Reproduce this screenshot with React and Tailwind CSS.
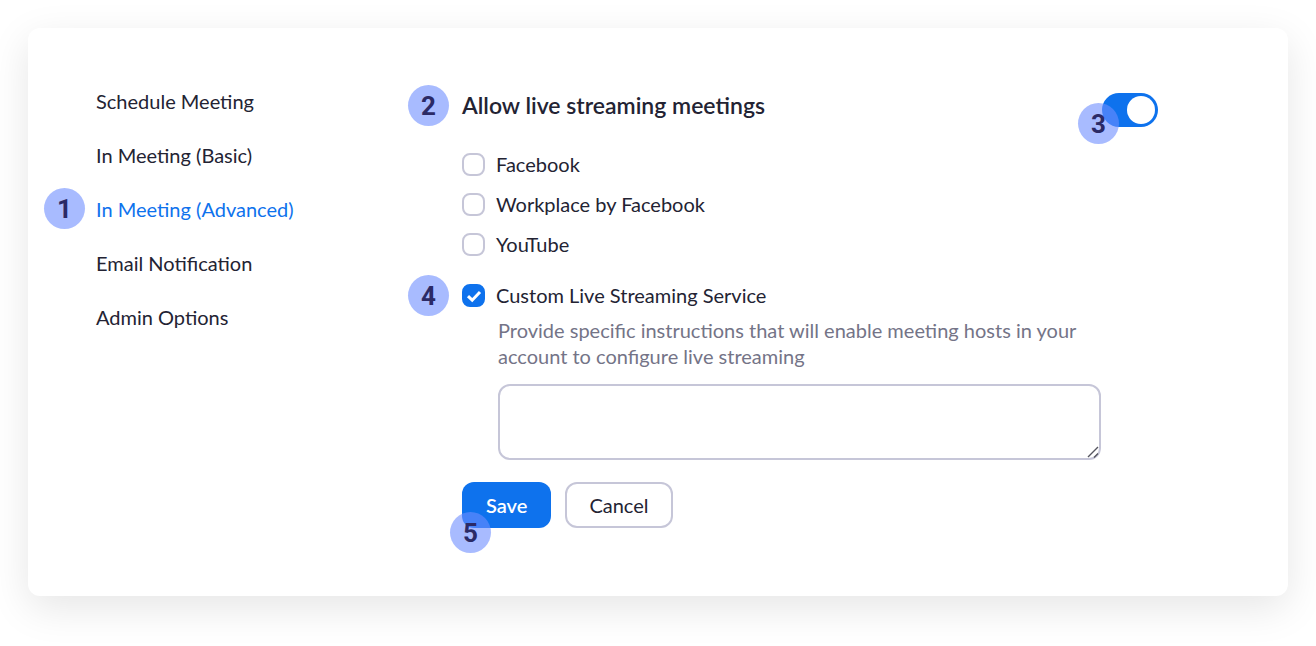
import { useState } from 'react';

const navItems = [
  'Schedule Meeting',
  'In Meeting (Basic)',
  'In Meeting (Advanced)',
  'Email Notification',
  'Admin Options',
];

const services = ['Facebook', 'Workplace by Facebook', 'YouTube', 'Custom Live Streaming Service'];

function StepBadge({ number, className }) {
  return (
    <span
      className={`pointer-events-none absolute flex h-[41px] w-[41px] items-center justify-center rounded-full bg-[#6e8eff]/60 font-['Roboto',sans-serif] text-[26px] leading-none font-bold text-[#2b2a66] ${className}`}
    >
      {number}
    </span>
  );
}

function ServiceOption({ label, checked, onChange }) {
  return (
    <label className="flex items-center gap-[11px] text-xl leading-10">
      <span className="relative flex h-[23px] w-[23px] items-center justify-center">
        <input
          type="checkbox"
          checked={checked}
          onChange={onChange}
          className="peer h-full w-full appearance-none rounded-lg border-2 border-[#c6c6d8] bg-white checked:border-[#0e72ed] checked:bg-[#0e72ed]"
        />
        <svg
          viewBox="0 0 23 23"
          fill="none"
          stroke="currentColor"
          strokeWidth="3"
          className="pointer-events-none absolute hidden h-full w-full text-white peer-checked:block"
        >
          <path d="M6 12.2 L10.2 16.2 L18 8" />
        </svg>
      </span>
      {label}
    </label>
  );
}

export default function App() {
  const [active, setActive] = useState('In Meeting (Advanced)');
  const [enabled, setEnabled] = useState(true);
  const [selected, setSelected] = useState(['Custom Live Streaming Service']);
  const [instructions, setInstructions] = useState('');

  const toggleService = (name) => {
    setSelected((prev) => (prev.includes(name) ? prev.filter((s) => s !== name) : [...prev, name]));
  };

  return (
    <div className="min-h-screen bg-white p-7 pb-[50px] font-['Lato',sans-serif] text-[#232333]">
      <main className="flex rounded-xl bg-white px-[68px] pt-[59px] pb-[68px] shadow-[0_12px_40px_rgba(0,0,0,0.1)]">
        <nav className="w-[366px] shrink-0">
          <ul className="flex flex-col gap-[26px] text-xl leading-7">
            {navItems.map((item) => (
              <li key={item} className="relative">
                {item === 'In Meeting (Advanced)' && <StepBadge number={1} className="top-[-7px] left-[-52px]" />}
                <a
                  href="#"
                  onClick={(e) => {
                    e.preventDefault();
                    setActive(item);
                  }}
                  className={item === active ? 'text-[#0e72ed]' : ''}
                >
                  {item}
                </a>
              </li>
            ))}
          </ul>
        </nav>

        <section className="flex-1 pr-[62px]">
          <div className="flex items-start justify-between">
            <h1 className="relative mt-0.5 text-[23px] leading-8 font-semibold">
              <StepBadge number={2} className="top-[-4px] left-[-54px]" />
              Allow live streaming meetings
            </h1>
            <div className="relative mt-1.5 h-[34px] w-14">
              <input
                type="checkbox"
                role="switch"
                aria-label="Allow live streaming meetings"
                checked={enabled}
                onChange={() => setEnabled(!enabled)}
                className="peer block h-full w-full appearance-none rounded-full bg-[#c6c6d8] checked:bg-[#0e72ed]"
              />
              <span className="pointer-events-none absolute top-[3px] left-[3px] h-7 w-7 rounded-full bg-white peer-checked:left-[25px]" />
              <StepBadge number={3} className="top-[10px] left-[-24px]" />
            </div>
          </div>

          <form onSubmit={(e) => e.preventDefault()}>
            <div className="mt-[17px]">
              {services.slice(0, 3).map((name) => (
                <ServiceOption
                  key={name}
                  label={name}
                  checked={selected.includes(name)}
                  onChange={() => toggleService(name)}
                />
              ))}
            </div>

            <div className="relative mt-[11px]">
              <StepBadge number={4} className="top-0 left-[-54px]" />
              <ServiceOption
                label={services[3]}
                checked={selected.includes(services[3])}
                onChange={() => toggleService(services[3])}
              />
            </div>

            <div className="mr-[57px] pl-9">
              <label htmlFor="instructions" className="mt-0.5 block max-w-[600px] text-xl leading-[26px] text-[#747487]">
                Provide specific instructions that will enable meeting hosts in your account to configure live streaming
              </label>
              <div className="relative mt-[15px]">
                <textarea
                  id="instructions"
                  value={instructions}
                  onChange={(e) => setInstructions(e.target.value)}
                  className="block h-[76px] w-full resize-y rounded-xl border-2 border-[#c6c6d8] bg-white px-3 py-2 text-xl [&::-webkit-resizer]:bg-transparent"
                />
                <svg
                  viewBox="0 0 14 14"
                  fill="none"
                  stroke="#55555f"
                  strokeWidth="1.4"
                  className="pointer-events-none absolute right-px bottom-px h-3.5 w-3.5"
                >
                  <path d="M2 12 L12 2 M8 12.5 L12 8.5" />
                </svg>
              </div>
            </div>

            <div className="relative mt-[22px] flex gap-3.5 text-xl">
              <button type="submit" className="h-[46px] rounded-xl bg-[#0e72ed] px-6 font-semibold text-white">
                Save
              </button>
              <button type="button" className="h-[46px] rounded-xl border-2 border-[#c6c6d8] bg-white px-[22px]">
                Cancel
              </button>
              <StepBadge number={5} className="top-[30px] left-[-12px]" />
            </div>
          </form>
        </section>
      </main>
    </div>
  );
}
